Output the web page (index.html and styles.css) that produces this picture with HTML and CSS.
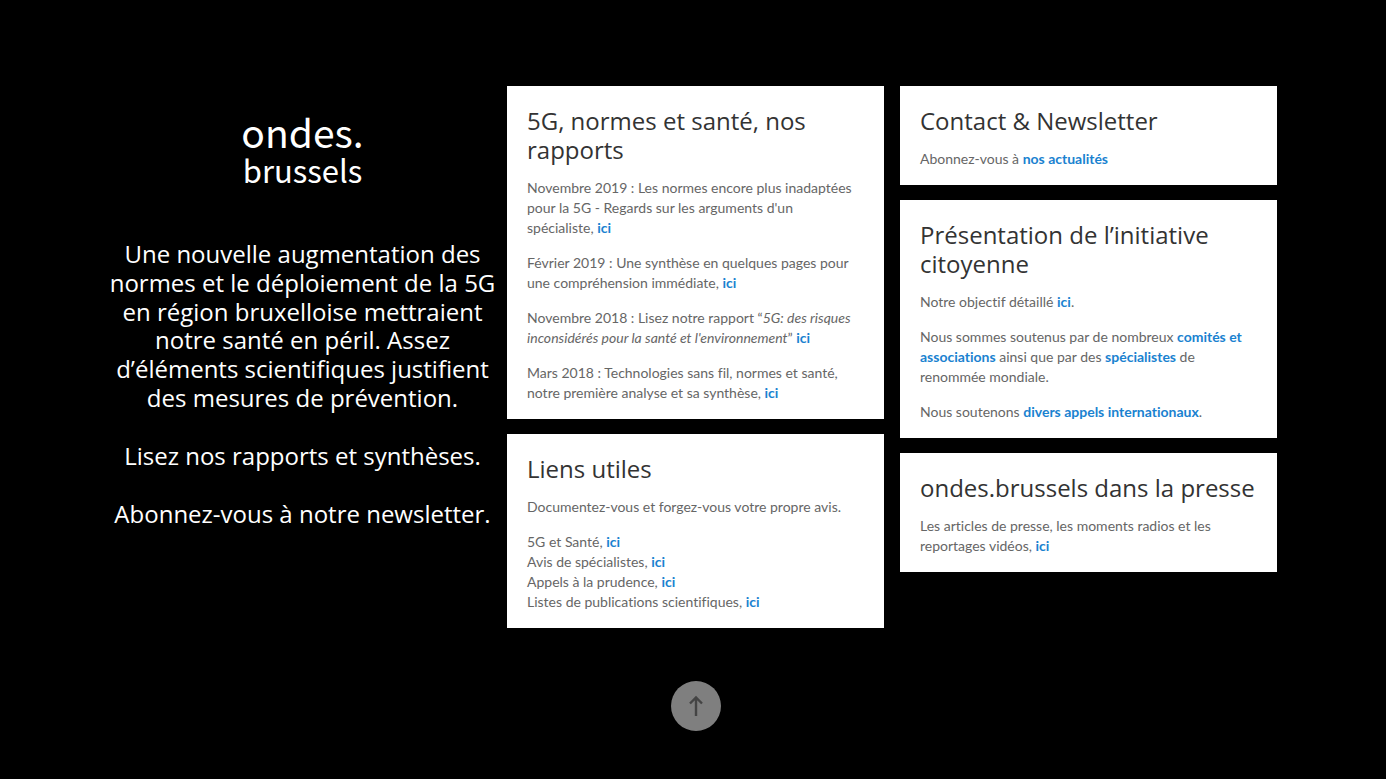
FILE: index.html
```html
<!DOCTYPE html>
<html lang="fr">
<head>
    <meta charset="UTF-8">
    <meta name="viewport" content="width=device-width, initial-scale=1">
    <title>ondes.brussels</title>
    <link rel="stylesheet" href="styles.css">
</head>
<body>

    <main class="container">
        <section class="intro">
            <h1 class="logo">
                <span class="logo-top">ondes.</span>
                <span class="logo-bottom">brussels</span>
            </h1>
            <p>Une nouvelle augmentation des normes et le déploiement de la 5G en région bruxelloise mettraient notre santé en péril. Assez d’éléments scientifiques justifient des mesures de prévention.</p>
            <p>Lisez nos rapports et synthèses.</p>
            <p>Abonnez-vous à notre newsletter.</p>
        </section>

        <div class="column">
            <article class="card">
                <h2>5G, normes et santé, nos rapports</h2>
                <p>Novembre 2019 : Les normes encore plus inadaptées pour la 5G - Regards sur les arguments d'un spécialiste,&nbsp;<a href="#">ici</a></p>
                <p>Février 2019 : Une synthèse en quelques pages pour une compréhension immédiate, <a href="#">ici</a></p>
                <p>Novembre 2018 : Lisez notre rapport “<em>5G: des risques inconsidérés pour la santé et l'environnement</em>” <a href="#">ici</a></p>
                <p>Mars 2018 : Technologies sans fil, normes et santé, notre première analyse et sa synthèse, <a href="#">ici</a></p>
            </article>
            <article class="card">
                <h2>Liens utiles</h2>
                <p>Documentez-vous et forgez-vous votre propre avis.</p>
                <p>
                    5G et Santé, <a href="#">ici</a><br>
                    Avis de spécialistes, <a href="#">ici</a><br>
                    Appels à la prudence, <a href="#">ici</a><br>
                    Listes de publications scientifiques, <a href="#">ici</a>
                </p>
            </article>
        </div>

        <div class="column">
            <article class="card">
                <h2>Contact &amp; Newsletter</h2>
                <p>Abonnez-vous à <a href="#">nos actualités</a></p>
            </article>
            <article class="card">
                <h2>Présentation de l’initiative citoyenne</h2>
                <p>Notre objectif détaillé <a href="#">ici</a>.</p>
                <p>Nous sommes soutenus par de nombreux <a href="#">comités et associations</a> ainsi que par des <a href="#">spécialistes</a> de renommée mondiale.</p>
                <p>Nous soutenons <a href="#">divers appels internationaux</a>.</p>
            </article>
            <article class="card">
                <h2>ondes.brussels dans la presse</h2>
                <p>Les articles de presse, les moments radios et les reportages vidéos, <a href="#">ici</a></p>
            </article>
        </div>
    </main>

    <footer class="footer">
        <a href="#" class="to-top" aria-label="Haut de page">
            <svg viewBox="0 0 50 50" fill="none" stroke="#444" stroke-width="2.4">
                <path d="M25 35V17M19 22.5L25 16.5L31 22.5"/>
            </svg>
        </a>
    </footer>

</body>
</html>
```
FILE: styles.css
```css
* {
    margin: 0;
    padding: 0;
    box-sizing: border-box;
}
body {
    padding: 86px 101px 48px 106px;
    background-color: #000;
    color: #666;
    font-family: Lato, sans-serif;
    font-size: 14px;
    line-height: 20px;
}
.container {
    display: grid;
    grid-template-columns: repeat(3, 1fr);
}
.intro {
    padding-top: 26px;
    color: #fff;
    font-family: "Open Sans", sans-serif;
    font-size: 24px;
    line-height: 1.2;
    text-align: center;
}
.intro p + p {
    margin-top: 29px;
}
.logo {
    display: flex;
    flex-direction: column;
    margin-bottom: 50px;
    font-family: "Noto Sans CJK SC", sans-serif;
    font-weight: normal;
}
.logo-top {
    font-size: 39px;
    line-height: 38px;
}
.logo-bottom {
    font-size: 31px;
    line-height: 40px;
}
.column {
    display: flex;
    flex-direction: column;
    gap: 15px;
    padding: 0 8px;
}
.card {
    padding: 20px 20px 16px;
    background: #fff;
}
.card h2 {
    margin-bottom: 14px;
    color: #333;
    font-family: "Open Sans", sans-serif;
    font-size: 24px;
    font-weight: normal;
    line-height: 29px;
}
.card p {
    font-variant-ligatures: none;
}
.card p + p {
    margin-top: 15px;
}
.card a {
    color: #1a82d0;
    font-weight: bold;
    text-decoration: none;
}
.footer {
    display: flex;
    justify-content: center;
    margin-top: 53px;
}
.to-top {
    width: 50px;
    height: 50px;
    border-radius: 50%;
    background: #7f7f7f;
}
.to-top svg {
    display: block;
}
```
